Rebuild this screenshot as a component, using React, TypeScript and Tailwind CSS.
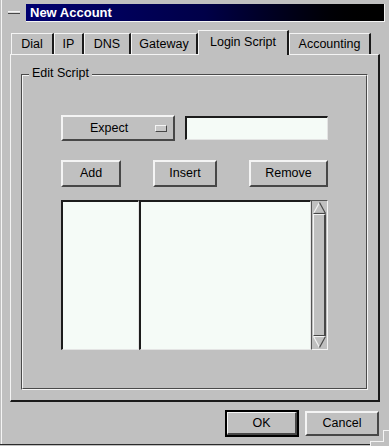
import React from "react";

const bevelUp =
  "border-2 border-t-[#f4f4f4] border-l-[#f4f4f4] border-b-[#474747] border-r-[#474747]";
const sunken =
  "border-t-2 border-l-2 border-b border-r border-t-[#1c1c1c] border-l-[#1c1c1c] border-b-[#e4e4e4] border-r-[#e4e4e4]";

function Btn({ w, label }: { w: string; label: string }) {
  return (
    <div className={`${w} h-[27px] ${bevelUp} flex items-center justify-center bg-[#c0c0c0]`}>
      {label}
    </div>
  );
}

function Tab({ w, label, active }: { w: string; label: string; active?: boolean }) {
  if (active) {
    return (
      <div
        className={`${w} h-[25px] mb-[-1px] relative z-10 bg-[#c0c0c0] border-t border-l border-t-[#f4f4f4] border-l-[#f4f4f4] border-r-2 border-r-[#1a1a1a] flex items-center justify-center pb-[2px]`}
      >
        {label}
      </div>
    );
  }
  return (
    <div
      className={`${w} h-[21px] bg-[#c0c0c0] border-t border-l border-t-[#f4f4f4] border-l-[#f4f4f4] border-r-2 border-r-[#1a1a1a] flex items-center justify-center pt-[1px]`}
    >
      {label}
    </div>
  );
}

function UpArrow() {
  return (
    <svg width="13" height="12" viewBox="0 0 13 12" className="block">
      <polygon points="6.5,0.5 12.5,11.5 0.5,11.5" fill="#c0c0c0" />
      <line x1="0.5" y1="11.5" x2="6.5" y2="0.5" stroke="#f4f4f4" strokeWidth="1.2" />
      <line x1="6.5" y1="0.5" x2="12.5" y2="11.5" stroke="#474747" strokeWidth="1.2" />
      <line x1="0.5" y1="11.5" x2="12.5" y2="11.5" stroke="#474747" strokeWidth="1.2" />
    </svg>
  );
}

function DownArrow() {
  return (
    <svg width="13" height="12" viewBox="0 0 13 12" className="block">
      <polygon points="0.5,0.5 12.5,0.5 6.5,11.5" fill="#c0c0c0" />
      <line x1="0.5" y1="0.5" x2="12.5" y2="0.5" stroke="#f4f4f4" strokeWidth="1.2" />
      <line x1="0.5" y1="0.5" x2="6.5" y2="11.5" stroke="#f4f4f4" strokeWidth="1.2" />
      <line x1="12.5" y1="0.5" x2="6.5" y2="11.5" stroke="#474747" strokeWidth="1.2" />
    </svg>
  );
}

export default function App() {
  return (
    <div
      className="relative w-[389px] h-[446px] overflow-hidden bg-[#c0c0c0] text-black text-[12.5px] leading-[15px]"
      style={{ fontFamily: '"Liberation Sans", Arial, sans-serif' }}
    >
      {/* window frame decorations */}
      <div className="absolute left-[1px] top-0 bottom-[2px] w-[1px] bg-[#f4f4f4]" />
      <div className="absolute left-0 top-[444px] w-[370px] h-[1px] bg-[#2a2a2a]" />
      <div className="absolute left-[370px] top-[441px] w-[1px] h-[5px] bg-[#f4f4f4]" />
      <div className="absolute left-[370px] top-[441px] w-[14px] h-[1px] bg-[#f4f4f4]" />
      <div className="absolute left-[383px] top-[430px] w-[1px] h-[12px] bg-[#f4f4f4]" />
      <div className="absolute left-[383px] top-[430px] w-[6px] h-[1px] bg-[#f4f4f4]" />

      {/* title row */}
      <div className="flex items-start pt-[4px]">
        <div className="ml-[8px] mt-[7px] w-[12px] h-[3px] border-t border-t-[#f4f4f4] border-b border-b-[#474747] bg-[#d8d8d8]" />
        <div className="ml-[6px] w-[359px] h-[18px] border-b border-r border-b-[#f4f4f4] border-r-[#f4f4f4] bg-linear-to-r from-[#000070] via-[#000048] to-black flex items-center pl-[4px] text-white font-bold text-[13px]">
          New Account
        </div>
      </div>

      {/* tabs */}
      <div className="mt-[8px] h-[24px] flex items-end pl-[11px]">
        <Tab w="w-[43px]" label="Dial" />
        <Tab w="w-[30px]" label="IP" />
        <Tab w="w-[47px]" label="DNS" />
        <Tab w="w-[67px]" label="Gateway" />
        <Tab w="w-[91px]" label="Login Script" active />
        <Tab w="w-[82px]" label="Accounting" />
      </div>

      {/* notebook panel */}
      <div className="ml-[10px] w-[370px] h-[348px] border-t border-l border-t-[#f4f4f4] border-l-[#f4f4f4] border-r-2 border-b-2 border-r-[#1a1a1a] border-b-[#1a1a1a] pt-[19px] pl-[10px]">
        <div className="relative w-[347px] h-[316px] border border-t-[#4a4a4a] border-l-[#4a4a4a] border-b-[#f4f4f4] border-r-[#f4f4f4]">
          <div className="w-full h-full border border-t-[#f4f4f4] border-l-[#f4f4f4] border-b-[#4a4a4a] border-r-[#4a4a4a] pl-[38px] pt-[39px]">
            <div className="w-[267px] flex flex-col">
              {/* row 1 */}
              <div className="flex items-center gap-[10px]">
                <div className={`w-[114px] h-[26px] ${bevelUp} flex items-center bg-[#c0c0c0]`}>
                  <div className="flex-1 text-center">Expect</div>
                  <div className="w-[12px] h-[7px] mr-[6px] border border-t-[#f4f4f4] border-l-[#f4f4f4] border-b-[#474747] border-r-[#474747] bg-[#c8c8c8]" />
                </div>
                <div className={`w-[143px] h-[24px] ${sunken} bg-[#f5fbf7]`} />
              </div>
              {/* row 2 */}
              <div className="mt-[19px] flex justify-between">
                <Btn w="w-[60px]" label="Add" />
                <Btn w="w-[64px]" label="Insert" />
                <Btn w="w-[79px]" label="Remove" />
              </div>
              {/* row 3 */}
              <div className="mt-[13px] h-[150px] flex">
                <div className={`w-[78px] h-full ${sunken} bg-[#f5fbf7]`} />
                <div className={`w-[172px] h-full ${sunken} bg-[#f5fbf7]`} />
                <div className="w-[17px] h-full border border-t-[#555] border-l-[#555] border-b-[#f4f4f4] border-r-[#f4f4f4] flex flex-col items-center pt-[1px] pb-[1px]">
                  <UpArrow />
                  <div className="flex-1 w-[13px] border border-t-[#f4f4f4] border-l-[#f4f4f4] border-b-[#474747] border-r-2 border-r-[#474747] bg-[#c0c0c0]" />
                  <DownArrow />
                </div>
              </div>
            </div>
          </div>
          <div className="absolute left-[7px] top-[-9px] px-[3px] bg-[#c0c0c0] leading-[15px]">
            Edit Script
          </div>
        </div>
      </div>

      {/* bottom buttons */}
      <div className="mt-[8px] flex items-center justify-end gap-[6px] pr-[10px]">
        <div className="w-[74px] h-[27px] border-2 border-black">
          <div className="w-full h-full border border-t-[#f4f4f4] border-l-[#f4f4f4] border-b-2 border-r-2 border-b-[#474747] border-r-[#474747] flex items-center justify-center">
            OK
          </div>
        </div>
        <div className={`w-[74px] h-[25px] ${bevelUp} flex items-center justify-center`}>
          Cancel
        </div>
      </div>
    </div>
  );
}
